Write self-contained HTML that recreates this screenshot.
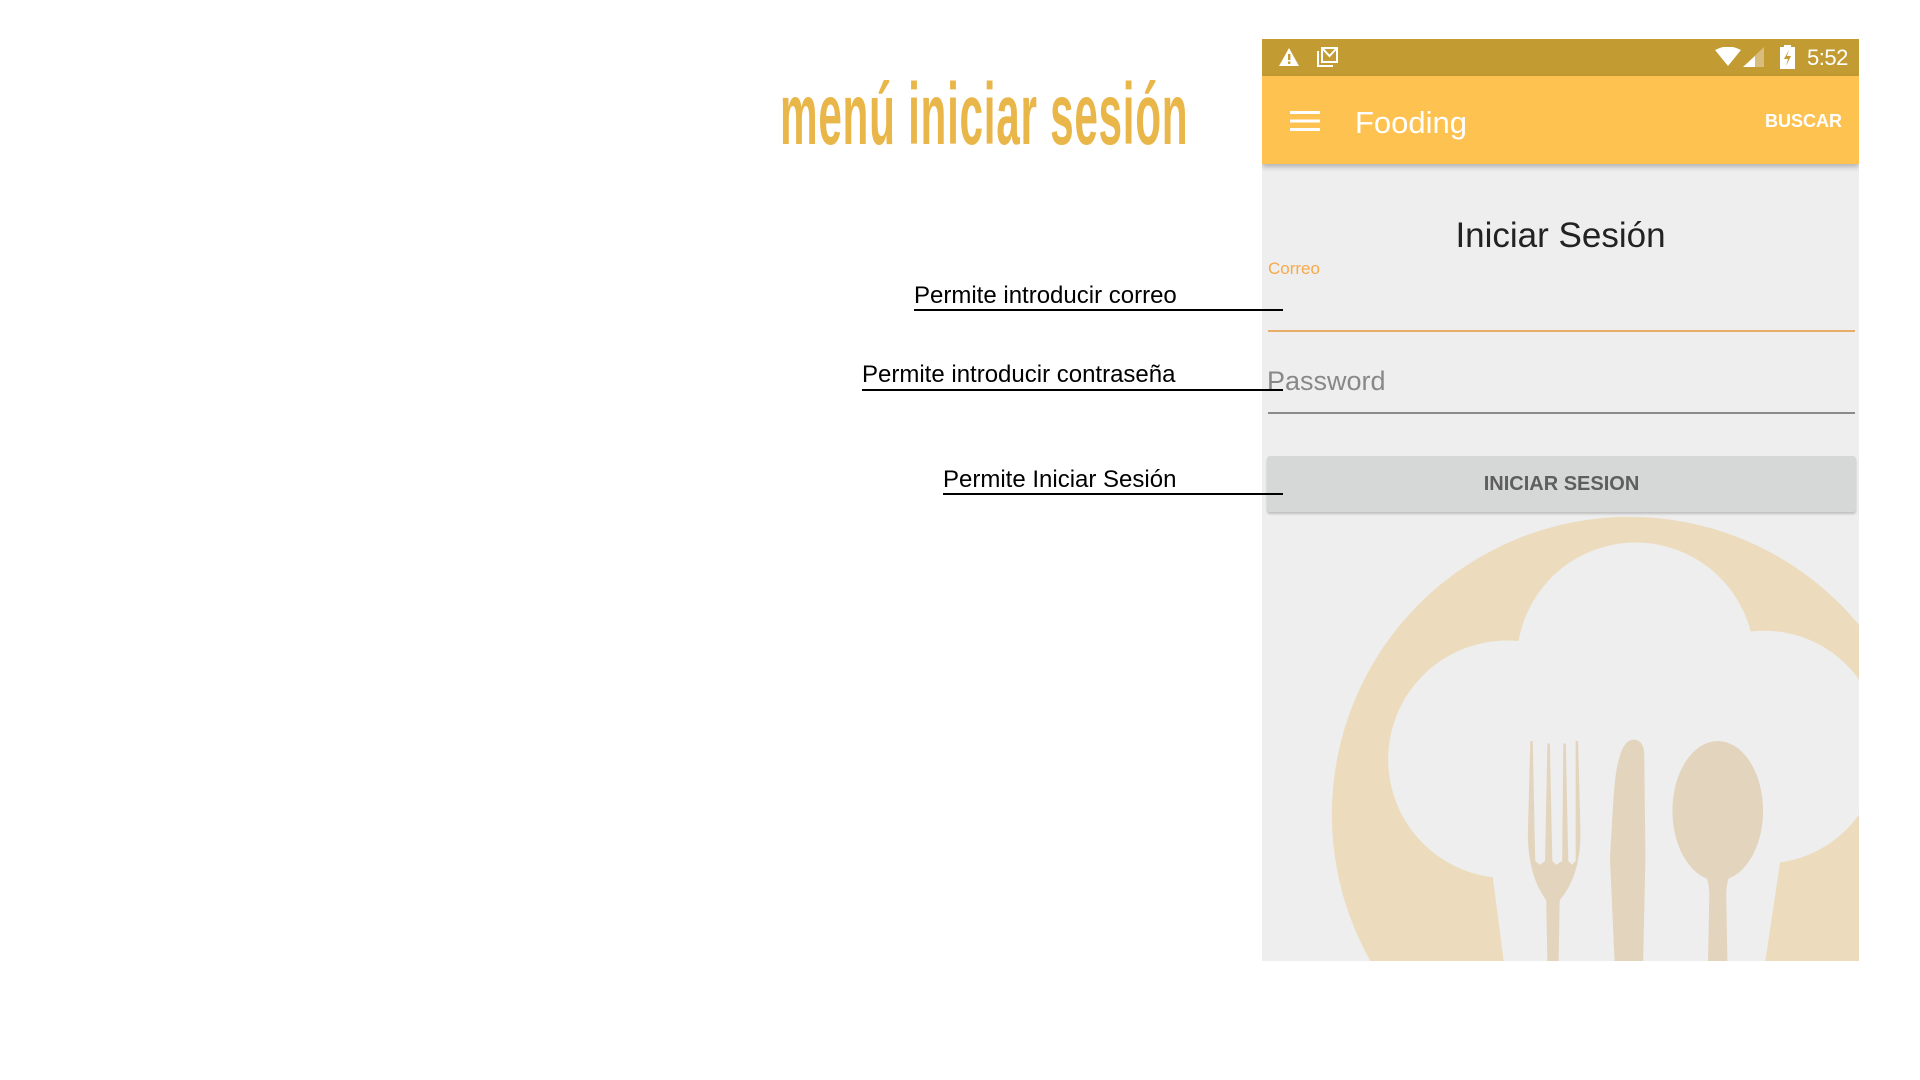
<!DOCTYPE html>
<html><head><meta charset="utf-8"><style>
html,body{margin:0;padding:0;background:#fff;width:1920px;height:1080px;overflow:hidden;font-family:"Liberation Sans",sans-serif;position:relative}
.a{position:absolute;white-space:nowrap}
.title{left:780px;top:64px;font-size:60px;font-weight:bold;color:#e9b64a;transform-origin:0 0;transform:scale(0.705,1.45);letter-spacing:1px}
.ann{font-size:24px;color:#000;line-height:28px}
.ln{position:absolute;height:1.5px;background:#000;z-index:5}
#phone{position:absolute;left:1262px;top:39px;width:597px;height:922px;background:#eeeeee;overflow:hidden}
#sb{position:absolute;left:0;top:0;width:597px;height:37px;background:#c29b32}
#ab{position:absolute;left:0;top:37px;width:597px;height:88px;background:#fec251;box-shadow:0 3px 5px rgba(0,0,0,.25)}
</style></head><body>
<div class="a title">menú iniciar sesión</div>

<div class="a ann" style="left:914px;top:282px">Permite introducir correo</div>
<div class="ln" style="left:914px;top:309px;width:369px"></div>
<div class="a ann" style="left:862px;top:361px">Permite introducir contraseña</div>
<div class="ln" style="left:862px;top:389px;width:421px"></div>
<div class="a ann" style="left:943px;top:466px">Permite Iniciar Sesión</div>
<div class="ln" style="left:943px;top:493px;width:340px"></div>

<div id="phone">
<svg style="position:absolute;left:0;top:125px" width="597" height="797" viewBox="1030 134 487.3 650.6" preserveAspectRatio="none">
<circle cx="1330" cy="665" r="243" fill="#ecdcbd"/>
<g fill="#eeeeee">
<circle cx="1335" cy="540" r="97"/>
<circle cx="1230" cy="620" r="97"/>
<circle cx="1440" cy="610" r="95"/>
<rect x="1225" y="540" width="225" height="160"/>
<polygon points="1215,690 1455,690 1440,790 1228,790"/>
</g>
<g fill="#e3d5bd">
<path d="M1249,605 L1247,680 Q1247,715 1262,735 L1263,790 L1272,790 L1273,735 Q1290,715 1290,680 L1288,605 L1286,605 L1286,703 L1283,706 L1280,703 L1278,607 L1276,607 L1275,703 L1270,706 L1267,703 L1265,607 L1263,607 L1261,703 L1257,706 L1253,703 L1251,605 Z"/>
<path d="M1332,604 Q1320,606 1317,650 L1314,700 L1318,790 L1341,790 L1343,700 L1342,615 Q1341,603 1332,604 Z"/>
<ellipse cx="1402" cy="662" rx="37" ry="57"/>
<path d="M1388,710 Q1396,716 1395,735 L1394,790 L1410,790 L1409,735 Q1408,716 1416,710 Z"/>
</g>
</svg>
<div id="sb">
<svg style="position:absolute;left:16px;top:8px" width="22" height="20" viewBox="0 0 22 20"><path d="M11 1 L21 19 L1 19 Z" fill="#fff"/><rect x="10" y="7" width="2.4" height="6" fill="#c29b32"/><rect x="10" y="14.5" width="2.4" height="2.4" fill="#c29b32"/></svg>
<svg style="position:absolute;left:55px;top:7px" width="22" height="22" viewBox="0 0 22 22"><path d="M1 5 V20 H16" fill="none" stroke="#fff" stroke-width="2"/><rect x="5" y="2" width="15" height="14" fill="none" stroke="#fff" stroke-width="2"/><path d="M6 3 L12.5 10 L19 3" fill="none" stroke="#fff" stroke-width="2"/></svg>
<svg style="position:absolute;left:453px;top:8px" width="26" height="20" viewBox="0 0 26 20"><path d="M0 3 Q13 -4 26 3 L13 19 Z" fill="#fff"/></svg>
<svg style="position:absolute;left:481px;top:8px" width="22" height="20" viewBox="0 0 22 20"><path d="M21 0 V20 H0 Z" fill="#d9bd7e"/><path d="M12 9 V20 H0 Z" fill="#fff"/></svg>
<svg style="position:absolute;left:518px;top:6px" width="15" height="24" viewBox="0 0 15 24"><rect x="4" y="0" width="7" height="3" fill="#fff"/><rect x="0" y="2" width="15" height="22" fill="#fff"/><path d="M9 5 L4 14 H8 L6 21 L11 11 H7 Z" fill="#c29b32"/></svg>
<div class="a" style="left:545px;top:6px;font-size:22px;color:#fff;letter-spacing:-0.5px">5:52</div>
</div>
<div id="ab">
<div style="position:absolute;left:28px;top:35px;width:30px;height:3px;background:#fff;box-shadow:0 8.5px 0 #fff,0 17px 0 #fff"></div>
<div class="a" style="left:93px;top:29px;font-size:31px;color:#fff">Fooding</div>
<div class="a" style="right:17px;top:35px;font-size:18px;font-weight:bold;color:#fff">BUSCAR</div>
</div>
<div class="a" style="left:0;width:597px;text-align:center;top:177px;font-size:35px;color:#222">Iniciar Sesión</div>
<div class="a" style="left:6px;top:220px;font-size:17px;color:#f9a94a">Correo</div>
<div style="position:absolute;left:6px;top:291px;width:587px;height:2px;background:#e9ad6a"></div>
<div class="a" style="left:5px;top:327px;font-size:27px;color:#888">Password</div>
<div style="position:absolute;left:6px;top:373px;width:587px;height:1.5px;background:#8a8a8a"></div>
<div style="position:absolute;left:5px;top:417px;width:589px;height:56px;background:#d6d7d7;border-radius:3px;box-shadow:0 2px 2px rgba(0,0,0,.2);text-align:center;line-height:56px;font-size:20px;font-weight:bold;color:#5e5e5e">INICIAR SESION</div>
</div>
</body></html>
